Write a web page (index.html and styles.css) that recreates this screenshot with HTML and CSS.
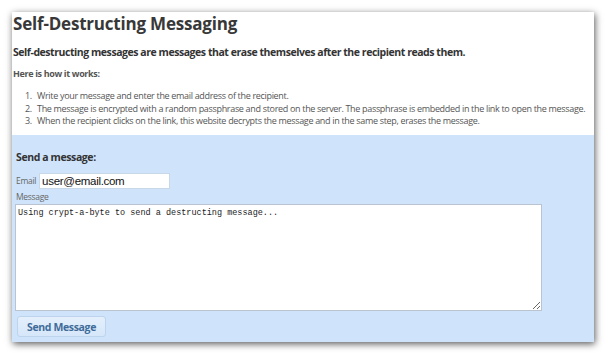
FILE: index.html
```html
<!DOCTYPE html>
<html>
<head>
<meta charset="utf-8">
<link rel="stylesheet" href="styles.css">
</head>
<body>
<div class="window">
  <h1 class="title">Self-Destructing Messaging</h1>
  <p class="lead">Self-destructing messages are messages that erase themselves after the recipient reads them.</p>
  <p class="how">Here is how it works:</p>
  <ol class="steps">
    <li>Write your message and enter the email address of the recipient.</li>
    <li>The message is encrypted with a random passphrase and stored on the server. The passphrase is embedded in the link to open the message.</li>
    <li>When the recipient clicks on the link, this website decrypts the message and in the same step, erases the message.</li>
  </ol>
  <form class="send">
    <h2 class="send-title">Send a message:</h2>
    <div class="email-row">
      <label class="lbl" for="email">Email</label>
      <input class="email" id="email" type="text" value="user@email.com">
    </div>
    <label class="lbl msg-lbl" for="msg">Message</label>
    <textarea class="msg" id="msg">Using crypt-a-byte to send a destructing message...</textarea>
    <button class="btn" type="button">Send Message</button>
  </form>
</div>
</body>
</html>
```
FILE: styles.css
```css
html, body {
  margin: 0;
  padding: 0;
  background: #ffffff;
}
body {
  padding: 12px;
  width: 606px;
  height: 353px;
  box-sizing: border-box;
  overflow: hidden;
}
.window {
  width: 582px;
  height: 330px;
  background: #ffffff;
  box-shadow: 1px 2px 7px rgba(0, 0, 0, 0.65);
  display: flex;
  flex-direction: column;
  overflow: hidden;
  font-family: "Open Sans", "Noto Sans", sans-serif;
  color: #333;
}
.title {
  margin: 0;
  padding: 0 0 0 1px;
  font-size: 17px;
  line-height: 24px;
  letter-spacing: -0.2px;
  font-weight: 700;
  color: #383838;
}
.lead {
  margin: 8px 0 0 1px;
  font-size: 10.5px;
  line-height: 16px;
  letter-spacing: -0.45px;
  font-weight: 700;
  color: #333;
}
.how {
  margin: 7px 0 0 1px;
  font-size: 9px;
  line-height: 14px;
  letter-spacing: -0.35px;
  font-weight: 700;
  color: #555;
}
.steps {
  margin: 9px 0 0 0;
  padding: 0 0 0 13px;
  list-style: none;
  counter-reset: step;
  font-size: 9px;
  line-height: 12.5px;
  letter-spacing: -0.32px;
  color: #555;
}
.steps li {
  counter-increment: step;
  white-space: nowrap;
}
.steps li::before {
  content: counter(step) ".";
  display: inline-block;
  width: 12px;
}
.send {
  margin-top: 7.5px;
  flex: 1;
  background: #cfe4fb;
  padding: 14px 4px 0 4px;
  display: flex;
  flex-direction: column;
  align-items: flex-start;
}
.send-title {
  margin: 0;
  font-size: 10.5px;
  line-height: 16px;
  letter-spacing: -0.4px;
  font-weight: 700;
  color: #333;
}
.email-row {
  margin-top: 8px;
  display: flex;
  align-items: center;
  gap: 3px;
}
.lbl {
  font-size: 8.5px;
  line-height: 12px;
  letter-spacing: -0.3px;
  color: #666;
}
.email {
  width: 131px;
  height: 16px;
  box-sizing: border-box;
  border: 1px solid #c8d8e8;
  padding: 0 2px;
  font-family: "Liberation Sans", Arial, sans-serif;
  font-size: 11.5px;
  letter-spacing: -0.3px;
  color: #111;
  background: #fff;
  outline: none;
}
.msg-lbl {
  margin-top: 2px;
}
.msg {
  margin: 1px 0 0 -1px;
  width: 527px;
  height: 107px;
  box-sizing: border-box;
  border: 1px solid #b9c4d0;
  padding: 3px 2px;
  font-family: "Liberation Mono", "Courier New", monospace;
  font-size: 8.5px;
  color: #222;
  background: #fff;
  resize: vertical;
  outline: none;
}
.btn {
  margin: 5px 0 0 1px;
  width: 89px;
  height: 21px;
  border: 1px solid #bcd4ec;
  border-radius: 3px;
  background: linear-gradient(#e4effb, #d6e7fa);
  font-family: "Open Sans", "Noto Sans", sans-serif;
  font-size: 10.5px;
  letter-spacing: -0.35px;
  font-weight: 700;
  color: #3f6b99;
  padding: 0;
}
```
